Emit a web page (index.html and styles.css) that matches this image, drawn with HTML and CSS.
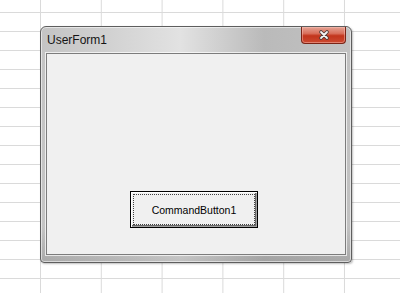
FILE: index.html
```html
<!DOCTYPE html>
<html lang="en">
<head>
    <meta charset="UTF-8">
    <meta name="viewport" content="width=device-width, initial-scale=1.0">
    <title>UserForm1</title>
    <link rel="stylesheet" href="styles.css">
</head>
<body>
    <div class="window">
        <div class="titlebar">
            <span class="title">UserForm1</span>
            <div class="close">
                <svg width="14" height="12" viewBox="0 0 14 12">
                    <path d="M4 3 L10 9 M10 3 L4 9" stroke="#4a3a38" stroke-width="3.6" stroke-linecap="round"/>
                    <path d="M4 3 L10 9 M10 3 L4 9" stroke="#f4f4f4" stroke-width="1.8" stroke-linecap="round"/>
                </svg>
            </div>
        </div>
        <div class="client">
            <button class="command-button" type="button">
                <span class="focus">CommandButton1</span>
            </button>
        </div>
    </div>
</body>
</html>
```

FILE: styles.css
```css
body {
    margin: 0;
    width: 400px;
    height: 293px;
    overflow: hidden;
    font-family: "Liberation Sans", Arial, sans-serif;
    background-color: #ffffff;
    background-image:
        linear-gradient(to bottom, #dadada 1px, transparent 1px),
        linear-gradient(to right, #dadada 1px, transparent 1px);
    background-size: 100% 19px, 60.8px 100%;
    background-position: 0 12px, 40px 0;
    padding-top: 26px;
    box-sizing: border-box;
}

.window {
    margin-left: 40px;
    width: 312px;
    height: 237px;
    box-sizing: border-box;
    border: 1px solid #5e5e5e;
    border-radius: 6px 6px 4px 4px;
    padding: 0 5px 7px 5px;
    display: flex;
    flex-direction: column;
    background:
        linear-gradient(to bottom, rgba(255, 255, 255, 0) 85%, rgba(90, 90, 90, 0.25) 100%),
        linear-gradient(to right, #c4c4c4 0%, #d0d0d0 20%, #e2e2e2 45%, #bababa 72%, #c2c2c2 100%);
    box-shadow: inset 0 0 0 1px rgba(255, 255, 255, 0.55), 1px 1px 2px rgba(0, 0, 0, 0.25);
}

.titlebar {
    height: 26px;
    flex: none;
    display: flex;
    justify-content: space-between;
    align-items: flex-start;
}

.title {
    padding: 6px 0 0 1px;
    font-size: 12px;
    line-height: 14px;
    color: #141414;
}

.close {
    width: 45px;
    height: 17px;
    box-sizing: border-box;
    border: 1px solid #7a2416;
    border-top: none;
    border-radius: 0 0 4px 4px;
    background: linear-gradient(to bottom, #e5a394 0%, #d9705c 40%, #c2351c 55%, #cc4a32 100%);
    box-shadow: inset 0 0 0 1px rgba(255, 200, 190, 0.45);
    display: flex;
    justify-content: center;
    align-items: center;
}

.client {
    flex: 1;
    border: 1px solid #7c7c7c;
    background: #f0f0f0;
    box-shadow: 0 0 0 1px rgba(255, 255, 255, 0.7);
}

.command-button {
    margin: 137px 0 0 83px;
    width: 128px;
    height: 37px;
    padding: 2px;
    box-sizing: border-box;
    display: flex;
    background: #f0f0f0;
    border: 1px solid #000000;
    box-shadow: inset 1px 1px 0 #ffffff, inset -1px -1px 0 #a0a0a0, inset -2px -2px 0 #696969;
    font-family: "Liberation Sans", Arial, sans-serif;
    font-size: 10.5px;
    color: #000000;
}

.focus {
    flex: 1;
    padding-top: 1px;
    border: 1px dotted #404040;
    display: flex;
    justify-content: center;
    align-items: center;
}
```
